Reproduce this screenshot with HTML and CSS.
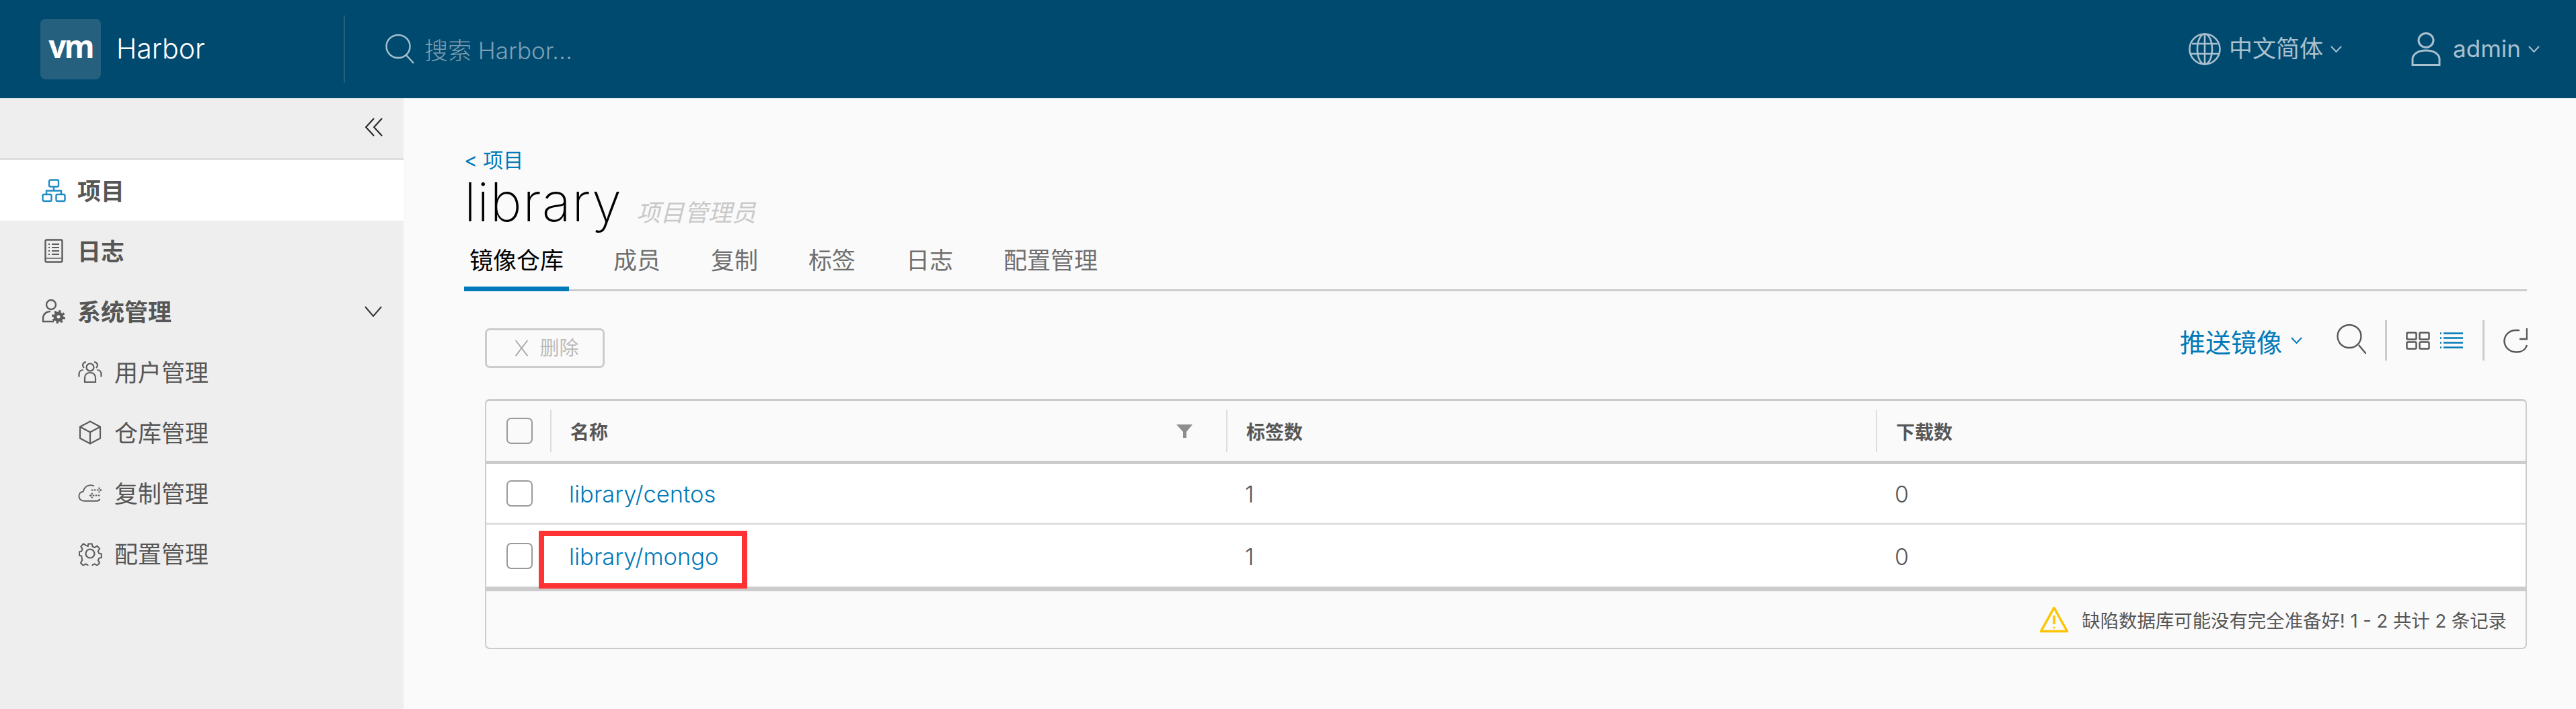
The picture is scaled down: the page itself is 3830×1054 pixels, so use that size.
FILE: index.html
```html
<!DOCTYPE html>
<html lang="zh-CN">
<head>
<meta charset="utf-8">
<title>Harbor</title>
<link rel="stylesheet" href="styles.css">
</head>
<body>
<header class="topbar">
  <div class="brand">
    <div class="logo"><span class="logo-vm">vm</span></div>
    <span class="brand-name">Harbor</span>
  </div>
  <div class="search">
    <svg class="search-icon" viewBox="0 0 44 44" fill="none" stroke="#a9c0ce" stroke-width="2.4"><ellipse cx="19" cy="18" rx="17.5" ry="17"/><path d="M31 31l11 12"/></svg>
    <span class="search-text">搜索 Harbor...</span>
  </div>
  <div class="top-right">
    <div class="lang">
      <svg class="globe" viewBox="0 0 48 48" fill="none" stroke="#a9c0ce" stroke-width="2.6"><circle cx="24" cy="24" r="22.5"/><ellipse cx="24" cy="24" rx="11" ry="22.5"/><path d="M24 1.500v45M5 16h38M3 31h42"/></svg>
      <span class="top-text">中文简体</span>
      <svg class="caret" viewBox="0 0 17 10" fill="none" stroke="#a9c0ce" stroke-width="2"><path d="M1 1l7.500 8L16 1"/></svg>
    </div>
    <div class="user">
      <svg class="user-icon" viewBox="0 0 44 50" fill="none" stroke="#a9c0ce" stroke-width="3"><ellipse cx="22" cy="12" rx="11" ry="10.500"/><path d="M2 48.500V40c0-8 9-13 20-13s20 5 20 13v8.500z"/></svg>
      <span class="top-text user-name">admin</span>
      <svg class="caret" viewBox="0 0 17 10" fill="none" stroke="#a9c0ce" stroke-width="2"><path d="M1 1l7.500 8L16 1"/></svg>
    </div>
  </div>
</header>
<div class="shell">
  <nav class="sidebar">
    <div class="collapse">
      <svg class="collapse-icon" viewBox="0 0 28 28" fill="none" stroke="#222" stroke-width="2"><path d="M14 1L2 14l12 13M26 1L14 14l12 13"/></svg>
    </div>
    <a class="nav-row active">
      <svg class="nav-icon" viewBox="0 0 36 34" fill="none" stroke="#1d8cc4" stroke-width="2.400"><rect x="11" y="1.500" width="14" height="10" rx="2"/><path d="M18 11.500v6M7 23v-5.500h22V23"/><rect x="1.500" y="23" width="13" height="10" rx="2"/><rect x="21.500" y="23" width="13" height="10" rx="2"/></svg>
      <span class="nav-label">项目</span>
    </a>
    <a class="nav-row">
      <svg class="nav-icon" viewBox="0 0 36 36" fill="none" stroke="#5d5d5d" stroke-width="2.400"><rect x="5.500" y="1.500" width="25" height="33" rx="2"/><path d="M10 8h2M15 8h11M10 13h2M15 13h11M10 18h2M15 18h11M10 23h2M15 23h11" stroke-width="2"/><path d="M5.500 29h25" stroke-width="1.500"/></svg>
      <span class="nav-label">日志</span>
    </a>
    <a class="nav-row">
      <svg class="nav-icon" viewBox="0 0 36 36" fill="none" stroke="#5d5d5d" stroke-width="2.400"><circle cx="14" cy="8" r="7"/><path d="M18 33H2v-5c0-6 5-10 11-10"/><circle cx="25" cy="26" r="5" stroke-width="5"/><circle cx="25" cy="26" r="8.500" stroke-width="3" stroke-dasharray="3.400 3.270"/></svg>
      <span class="nav-label">系统管理</span>
      <svg class="nav-caret" viewBox="0 0 26 16" fill="none" stroke="#333" stroke-width="2"><path d="M1 1l12 14L25 1"/></svg>
    </a>
    <a class="sub-row">
      <svg class="sub-icon" viewBox="0 0 36 36" fill="none" stroke="#5d5d5d" stroke-width="2.200"><circle cx="18" cy="11" r="5.500"/><path d="M10 33v-6c0-5 3.500-8 8-8s8 3 8 8v6z"/><path d="M12 3.500A4.500 4.500 0 0 0 7 8c0 2 1 3 2 4M1.500 25v-4c0-4 3-6 6-6M24 3.500A4.500 4.500 0 0 1 29 8c0 2-1 3-2 4M34.500 25v-4c0-4-3-6-6-6"/></svg>
      <span class="sub-label">用户管理</span>
    </a>
    <a class="sub-row">
      <svg class="sub-icon" viewBox="0 0 36 36" fill="none" stroke="#5d5d5d" stroke-width="2.200"><path d="M18 1.500L33 9.500v17L18 34.500 3 26.500v-17z"/><path d="M3 9.500l15 8 15-8M18 17.500v17"/></svg>
      <span class="sub-label">仓库管理</span>
    </a>
    <a class="sub-row">
      <svg class="sub-icon" viewBox="0 0 40 30" fill="none" stroke="#5d5d5d" stroke-width="2.200"><path d="M36 25c-1 2-3 3-5 3H10C5 28 1.500 24.500 1.500 20S5 13 8.500 12.500C10 6 15 2 21 2c2 0 4 .5 5.500 1.500"/><path d="M22 10h16M34 6l4 4-4 4" stroke-dasharray="3 1.500"/><path d="M36 19H20M24 15l-4 4 4 4" stroke-dasharray="3 1.500"/></svg>
      <span class="sub-label">复制管理</span>
    </a>
    <a class="sub-row">
      <svg class="sub-icon" viewBox="0 0 36 36" fill="none" stroke="#5d5d5d" stroke-width="2.200"><circle cx="18" cy="18" r="6.500"/><path d="M15 2h6l1 4.500 3.500 1.500 4-2.500 4 4.500-2.500 4 1.500 3.500 4 1v6l-4 1-1.500 3.500 2.500 4-4 4.500-4-2.500-3.500 1.500-1 4h-6l-1-4-3.500-1.500-4 2.500-4-4.500 2.500-4L4 22l-3.500-1v-6L4 14l1.500-3.500-2.500-4 4-4.500 4 2.500L14.500 6z" transform="translate(1.600 1.600) scale(.91)"/></svg>
      <span class="sub-label">配置管理</span>
    </a>
  </nav>
  <main class="content">
    <a class="back"><span class="back-arrow">&lt;</span> 项目</a>
    <div class="title-row">
      <h1 class="title">library</h1>
      <span class="role">项目管理员</span>
    </div>
    <div class="tabs">
      <a class="tab tab-active">镜像仓库</a>
      <a class="tab">成员</a>
      <a class="tab">复制</a>
      <a class="tab">标签</a>
      <a class="tab">日志</a>
      <a class="tab">配置管理</a>
    </div>
    <div class="panel">
      <div class="toolbar">
        <button class="btn-delete"><svg class="x-icon" viewBox="0 0 24 28" fill="none" stroke="#a8a8a8" stroke-width="2"><path d="M2 1l20 26M22 1L2 27"/></svg>删除</button>
        <div class="tools">
          <a class="push">推送镜像<svg class="caret push-caret" viewBox="0 0 17 10" fill="none" stroke="#0079b8" stroke-width="2"><path d="M1 1l7.500 8L16 1"/></svg></a>
          <svg class="tool-search" viewBox="0 0 44 44" fill="none" stroke="#565656" stroke-width="2.400"><ellipse cx="19" cy="18" rx="17.500" ry="17"/><path d="M33 31l11 13"/></svg>
          <span class="tool-sep"></span>
          <svg class="tool-grid" viewBox="0 0 36 27" fill="none" stroke="#565656" stroke-width="2.400"><rect x="1.500" y="1.500" width="14" height="10" rx="1.500"/><rect x="20.500" y="1.500" width="14" height="10" rx="1.500"/><rect x="1.500" y="15.500" width="14" height="10" rx="1.500"/><rect x="20.500" y="15.500" width="14" height="10" rx="1.500"/></svg>
          <svg class="tool-list" viewBox="0 0 34 24" fill="none" stroke="#0079b8" stroke-width="2.600"><path d="M0 1.500h2M5 1.500h29M0 8.500h2M5 8.500h29M0 15.500h2M5 15.500h29M0 22.500h2M5 22.500h29"/></svg>
          <span class="tool-sep tool-sep-2"></span>
          <svg class="tool-refresh" viewBox="0 0 36 38" fill="none" stroke="#565656" stroke-width="2.400"><path d="M35 26c-2 7-8 10.500-15 10.500C9 36.500 1.500 29 1.500 20S9 4 18 4h6"/><path d="M35 1v16H24"/></svg>
        </div>
      </div>
      <div class="grid">
        <div class="row row-head">
          <div class="cell-check"><span class="checkbox"></span></div>
          <div class="cell head-cell head-name">名称<svg class="filter" viewBox="0 0 24 20" fill="#8e8e8e"><path d="M0 0h24l-9 11v9h-5V11z"/></svg></div>
          <div class="cell head-cell">标签数</div>
          <div class="cell head-cell">下载数</div>
        </div>
        <div class="row row-body row-line">
          <div class="cell-check"><span class="checkbox"></span></div>
          <div class="cell"><a class="repo">library/centos</a></div>
          <div class="cell num">1</div>
          <div class="cell num">0</div>
        </div>
        <div class="row row-body row-last">
          <div class="cell-check"><span class="checkbox"></span></div>
          <div class="cell"><a class="repo">library/mongo</a></div>
          <div class="cell num">1</div>
          <div class="cell num">0</div>
          <span class="highlight"></span>
        </div>
        <div class="grid-foot">
          <svg class="warn" viewBox="0 0 44 40" fill="none" stroke="#fdc500" stroke-width="3.500" stroke-linejoin="round"><path d="M22 2.500L2.500 37.500h39z"/><path d="M22 14v13" stroke-width="3.600"/><circle cx="22" cy="32" r="1.600" fill="#fdc500" stroke="none"/></svg>
          <span>缺陷数据库可能没有完全准备好! 1 - 2 共计 2 条记录</span>
        </div>
      </div>
    </div>
  </main>
</div>
</body>
</html>
```
FILE: styles.css
```css
* { box-sizing: border-box; }
html, body { margin: 0; height: 100%; }
body {
  font-family: "Inter", "Noto Sans CJK SC", sans-serif;
  color: #565656;
  background: #fafafa;
  overflow: hidden;
}
a { display: block; }
svg { display: block; flex: none; }

.topbar {
  height: 146px;
  background: #004a70;
  display: flex;
  align-items: center;
}
.brand {
  width: 511px;
  padding-left: 60px;
  display: flex;
  align-items: center;
  height: 100px;
}
.logo {
  width: 90px;
  height: 90px;
  border-radius: 8px;
  background: #26607f;
  display: flex;
  align-items: center;
  justify-content: center;
}
.logo-vm {
  color: #fff;
  font: 700 46px/1 "Open Sans", sans-serif;
  letter-spacing: -3px;
  margin-top: -10px;
}
.brand-name {
  color: #fff;
  font-size: 41px;
  font-weight: 300;
  margin-left: 23px;
  margin-top: -2px;
}
.search {
  height: 100px;
  border-left: 2px solid #26607f;
  padding-left: 60px;
  display: flex;
  align-items: center;
  gap: 14px;
}
.search-icon { width: 44px; height: 44px; }
.search-text {
  color: #7d9fb3;
  font-size: 35px;
  font-weight: 300;
  margin-top: -2px;
}
.top-right {
  margin-left: auto;
  display: flex;
  align-items: center;
  padding-right: 54px;
}
.lang, .user { display: flex; align-items: center; }
.lang { margin-right: 103px; }
.globe { width: 48px; height: 48px; margin-right: 12px; }
.user-icon { width: 44px; height: 50px; margin-right: 18px; }
.top-text { color: #a9c0ce; font-size: 35px; line-height: 48px; margin-top: -3px; }
.caret { width: 17px; height: 10px; margin-left: 11px; }

.shell { display: flex; height: 908px; }
.sidebar {
  width: 600px;
  flex: none;
  background: #eee;
}
.collapse {
  height: 92px;
  border-bottom: 3px solid #ddd;
  display: flex;
  justify-content: flex-end;
  align-items: center;
  padding-right: 30px;
}
.collapse-icon { width: 28px; height: 28px; margin-top: -3px; }
.nav-row {
  height: 90px;
  display: flex;
  align-items: center;
  padding-left: 62px;
  color: #565656;
}
.nav-row.active { background: #fff; }
.nav-icon { width: 36px; height: 36px; }
.nav-label {
  font-size: 35px;
  font-weight: 700;
  margin-left: 17px;
  margin-top: -3px;
}
.nav-caret { width: 26px; height: 16px; margin-left: auto; margin-right: 32px; }
.sub-row {
  height: 90px;
  display: flex;
  align-items: center;
  padding-left: 116px;
}
.sub-icon { width: 36px; height: 36px; }
.sub-label { font-size: 35px; margin-left: 18px; margin-top: -3px; }

.content {
  flex: 1;
  min-width: 0;
  padding: 74px 73px 0 90px;
}
.back {
  color: #0079b8;
  font-size: 30px;
  line-height: 36px;
}
.title-row {
  height: 88px;
  display: flex;
  align-items: baseline;
  gap: 21px;
}
.title {
  margin: 0;
  color: #000;
  font-size: 80px;
  font-weight: 200;
  line-height: 88px;
  letter-spacing: 1.300px;
}
.role {
  color: #c9c9c9;
  font-size: 35.500px;
  font-style: italic;
}
.tabs {
  height: 89px;
  display: flex;
  align-items: flex-start;
  gap: 61px;
  border-bottom: 3px solid #ccc;
}
.tab {
  height: 86px;
  padding: 0 7px;
  font-size: 35px;
  line-height: 86px;
  color: #6f6f6f;
}
.tab-active {
  height: 89px;
  color: #000;
  border-bottom: 7px solid #0079b8;
  margin-right: -2px;
  padding: 0 8px;
}
.panel { padding: 43px 0 0 31px; }
.toolbar {
  height: 71px;
  display: flex;
  align-items: flex-end;
  justify-content: space-between;
}
.btn-delete {
  width: 178px;
  height: 59px;
  border: 3px solid #ccc;
  border-radius: 7px;
  background: transparent;
  color: #bbb;
  font: 400 29px/1 "Inter", "Noto Sans CJK SC", sans-serif;
  display: flex;
  align-items: center;
  justify-content: center;
  gap: 14px;
  padding: 0 0 0 4px;
}
.x-icon { width: 25px; height: 25px; }
.tools {
  align-self: flex-start;
  display: flex;
  align-items: center;
  height: 60px;
}
.push {
  color: #0079b8;
  font-size: 38px;
  display: flex;
  align-items: center;
}
.push-caret { margin-left: 13px; }
.tool-search { width: 44px; height: 44px; margin-left: 51px; margin-top: -4px; }
.tool-sep { width: 3px; height: 60px; background: #ccc; margin-left: 28px; }
.tool-sep-2 { margin-left: 29px; }
.tool-grid { width: 36px; height: 27px; margin-left: 28px; }
.tool-list { width: 34px; height: 24px; margin-left: 15px; }
.tool-refresh { width: 36px; height: 38px; margin-left: 28px; margin-right: -1px; }

.grid {
  margin-top: 46px;
  border: 2px solid #ccc;
  border-top-width: 3px;
  border-radius: 7px;
  background: #fafafa;
}
.row {
  position: relative;
  display: grid;
  grid-template-columns: 95px 1005px 966px 1fr;
  align-items: center;
}
.row-head {
  height: 94px;
  border-bottom: 5px solid #ccc;
}
.row-body { height: 90px; background: #fff; }
.row-last { height: 92px; }
.row-line { border-bottom: 3px solid #ddd; }
.cell-check { display: flex; padding-left: 30px; }
.checkbox {
  width: 39px;
  height: 39px;
  border: 2px solid #9a9a9a;
  border-radius: 7px;
  background: #fff;
}
.row-head .checkbox { background: #fafafa; }
.cell { padding-left: 28px; padding-top: 2px; font-size: 34px; }
.head-cell {
  height: 63px;
  padding-top: 0;
  border-left: 2px solid #ddd;
  display: flex;
  align-items: center;
  font-size: 28px;
  font-weight: 700;
  color: #565656;
}
.head-name { position: relative; }
.filter { position: absolute; right: 50px; top: 22px; width: 24px; height: 20px; }
.repo { color: #0079b8; font-size: 34.500px; font-weight: 300; }
.num { font-weight: 300; }
.highlight {
  position: absolute;
  left: 78px;
  top: 9px;
  width: 310px;
  height: 86px;
  border: 8px solid #f33;
}
.grid-foot {
  height: 91px;
  border-top: 7px solid #ccc;
  display: flex;
  align-items: center;
  justify-content: flex-end;
  padding-right: 28px;
  font-size: 27.400px;
  color: #565656;
}
.warn { width: 44px; height: 40px; margin-right: 19px; }
```
